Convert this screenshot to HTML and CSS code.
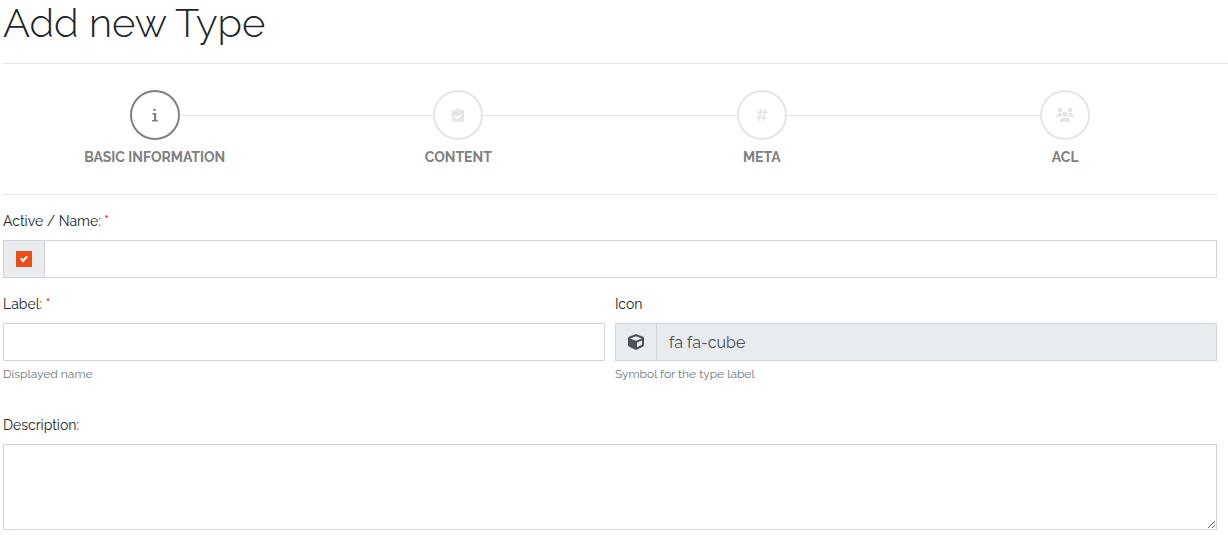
FILE: index.html
```html
<!DOCTYPE html>
<html lang="en">
<head>
<meta charset="utf-8">
<title>Add new Type</title>
<link rel="stylesheet" href="styles.css">
</head>
<body>
<header class="page-header"><h1>Add new Type</h1></header>
<form class="wizard">
  <ol class="steps">
    <li class="step active">
      <a href="#basic">
        <span class="dot"><svg width="6" height="14" viewBox="0 0 6 14"><path d="M1.500.700h2.200v2.300h-2.200zM.4 5H4.200v7h1.600v1.500H0V12h2V6.500H.4z"/></svg></span>
        <span class="caption">BASIC INFORMATION</span>
      </a>
    </li>
    <li class="step">
      <a href="#content">
        <span class="dot"><svg width="12" height="14" viewBox="0 0 384 512" preserveAspectRatio="none"><path d="M336 64h-80c0-35.300-28.700-64-64-64s-64 28.700-64 64H48C21.500 64 0 85.500 0 112v352c0 26.500 21.500 48 48 48h288c26.500 0 48-21.500 48-48V112c0-26.500-21.500-48-48-48zM192 40c13.300 0 24 10.700 24 24s-10.700 24-24 24-24-10.700-24-24 10.700-24 24-24zm121.200 231.800l-143 141.800c-4.700 4.700-12.300 4.600-17-.1l-82.600-83.300c-4.700-4.700-4.600-12.300.1-17L99.100 285c4.700-4.700 12.300-4.600 17 .1l46 46.400 106-105.200c4.700-4.700 12.300-4.600 17 .1l28.200 28.400c4.700 4.800 4.600 12.300-.1 17z"/></svg></span>
        <span class="caption">CONTENT</span>
      </a>
    </li>
    <li class="step">
      <a href="#meta">
        <span class="dot"><svg width="12" height="14" viewBox="0 0 448 512"><path d="M440.667 182.109l7.143-40c1.313-7.355-4.342-14.109-11.813-14.109h-74.810l14.623-81.891C377.123 38.754 371.468 32 363.997 32h-40.632a12 12 0 0 0-11.813 9.891L296.175 128H197.540l14.623-81.891C213.477 38.754 207.822 32 200.350 32h-40.632a12 12 0 0 0-11.813 9.891L132.528 128H53.432a12 12 0 0 0-11.813 9.891l-7.143 40C33.163 185.246 38.818 192 46.289 192h74.810L98.242 320H19.146a12 12 0 0 0-11.813 9.891l-7.143 40C-1.123 377.246 4.532 384 12.003 384h74.810L72.190 465.891C70.877 473.246 76.532 480 84.003 480h40.632a12 12 0 0 0 11.813-9.891L151.826 384h98.634l-14.623 81.891C234.523 473.246 240.178 480 247.650 480h40.632a12 12 0 0 0 11.813-9.891L315.472 384h79.096a12 12 0 0 0 11.813-9.891l7.143-40c1.313-7.355-4.342-14.109-11.813-14.109h-74.810l22.857-128h79.096a12 12 0 0 0 11.813-9.891zM261.889 320h-98.634l22.857-128h98.634l-22.857 128z"/></svg></span>
        <span class="caption">META</span>
      </a>
    </li>
    <li class="step">
      <a href="#acl">
        <span class="dot"><svg width="18" height="14" viewBox="0 0 640 512"><circle cx="144" cy="80" r="80"/><circle cx="512" cy="80" r="80"/><circle cx="320" cy="224" r="96"/><path d="M0 298.700C0 239.800 47.800 192 106.700 192h42.700c15.900 0 31 3.500 44.600 9.700-1.300 7.200-1.900 14.700-1.900 22.300 0 38.200 16.800 72.500 43.300 96H21.300C9.600 320 0 310.400 0 298.700zM405.300 320h-.7c26.600-23.500 43.300-57.800 43.300-96 0-7.600-.7-15-1.900-22.300 13.600-6.300 28.700-9.700 44.600-9.700h42.700c58.900 0 106.700 47.800 106.700 106.700 0 11.700-9.600 21.300-21.300 21.300zM128 485.300c0-73.600 59.700-133.300 133.300-133.300h117.300c73.700 0 133.400 59.700 133.400 133.300 0 14.700-11.900 26.700-26.700 26.700H154.700c-14.700 0-26.700-11.900-26.700-26.700z"/></svg></span>
        <span class="caption">ACL</span>
      </a>
    </li>
  </ol>
  <div class="fields">
    <div class="field">
      <label for="name">Active / Name: <span class="required">*</span></label>
      <div class="group">
        <span class="addon"><input class="check" type="checkbox" aria-label="Active" checked></span>
        <input class="control" id="name" type="text">
      </div>
    </div>
    <div class="row">
      <div class="field">
        <label for="label">Label: <span class="required">*</span></label>
        <input class="control" id="label" type="text">
        <small>Displayed name</small>
      </div>
      <div class="field">
        <label for="icon">Icon</label>
        <div class="group">
          <span class="addon"><svg width="16" height="16" viewBox="0 0 512 512"><path d="M239.100 6.300l-208 78c-18.700 7-31.100 25-31.100 45v225.100c0 18.200 10.300 34.800 26.500 42.900l208 104c13.500 6.800 29.400 6.800 42.900 0l208-104c16.300-8.100 26.500-24.800 26.500-42.900V129.300c0-20-12.400-37.900-31.100-44.900l-208-78C262 2.200 250 2.200 239.100 6.300zM256 68.400l192 72v1.100l-192 78-192-78v-1.100l192-72zm32 356V275.500l160-65v133.900l-160 80z"/></svg></span>
          <input class="control" id="icon" type="text" value="fa fa-cube" readonly>
        </div>
        <small>Symbol for the type label</small>
      </div>
    </div>
    <div class="field description">
      <label for="description">Description:</label>
      <textarea class="control" id="description"></textarea>
    </div>
  </div>
</form>
</body>
</html>
```
FILE: styles.css
```css
* { box-sizing: border-box; }
body {
  margin: 0;
  padding-left: 3px;
  background: #fff;
  color: #212529;
  font: 400 14px/21px Raleway, Lato, sans-serif;
}
h1 {
  margin: 0;
  font-size: 40px;
  font-weight: 300;
  line-height: 46px;
}
.page-header {
  padding-bottom: 17px;
  border-bottom: 1px solid #e5e5e5;
}
.wizard { margin-right: 11px; }
.steps {
  display: grid;
  grid-template-columns: repeat(4, 1fr);
  margin: 0;
  padding: 26px 0;
  list-style: none;
  border-bottom: 1px solid #e5e5e5;
}
.step { position: relative; }
.step + .step::before {
  content: "";
  position: absolute;
  top: 25px;
  right: 50%;
  width: 100%;
  height: 1px;
  background: #e5e5e5;
}
.step a {
  position: relative;
  z-index: 1;
  display: flex;
  flex-direction: column;
  align-items: center;
  gap: 7px;
  color: #808080;
  text-decoration: none;
}
.dot {
  display: flex;
  align-items: center;
  justify-content: center;
  width: 50px;
  height: 50px;
  border: 2px solid #e5e5e5;
  border-radius: 50%;
  background: #fff;
  color: #e5e5e5;
}
.active .dot { border-color: #808080; color: #808080; }
svg { fill: currentColor; }
.caption { font-weight: 700; }
.fields {
  display: flex;
  flex-direction: column;
  gap: 16px;
  padding-top: 16px;
}
.field { display: flex; flex-direction: column; min-width: 0; }
.row { display: grid; grid-template-columns: 1fr 1fr; gap: 10px; }
label { margin-bottom: 8px; }
.required { color: #e3241b; font-weight: 500; }
.group { display: flex; }
.addon {
  display: flex;
  align-items: center;
  justify-content: center;
  width: 41px;
  border: 1px solid #ced4da;
  border-right: 0;
  background: #e9ecef;
  color: #495057;
}
.control {
  width: 100%;
  min-width: 0;
  height: 38px;
  padding: 6px 12px;
  border: 1px solid #ced4da;
  border-radius: 0;
  outline: 0;
  background: #fff;
  color: #495057;
  font: inherit;
  font-size: 16px;
}
.group .control { flex: 1; }
.control:read-only { background: #e9ecef; }
.check {
  appearance: none;
  display: grid;
  place-items: center;
  width: 16px;
  height: 16px;
  margin: 0;
  background: #eb4d17;
}
.check:checked::before {
  content: "";
  width: 8px;
  height: 7px;
  background: #fff;
  clip-path: polygon(0 50%, 20% 30%, 38% 52%, 82% 0, 100% 20%, 38% 100%);
}
small {
  margin-top: 4px;
  color: #6c757d;
  font-size: 12px;
  line-height: 18px;
}
.description { padding-top: 16px; }
textarea.control { height: 86px; resize: vertical; display: block; }
```
